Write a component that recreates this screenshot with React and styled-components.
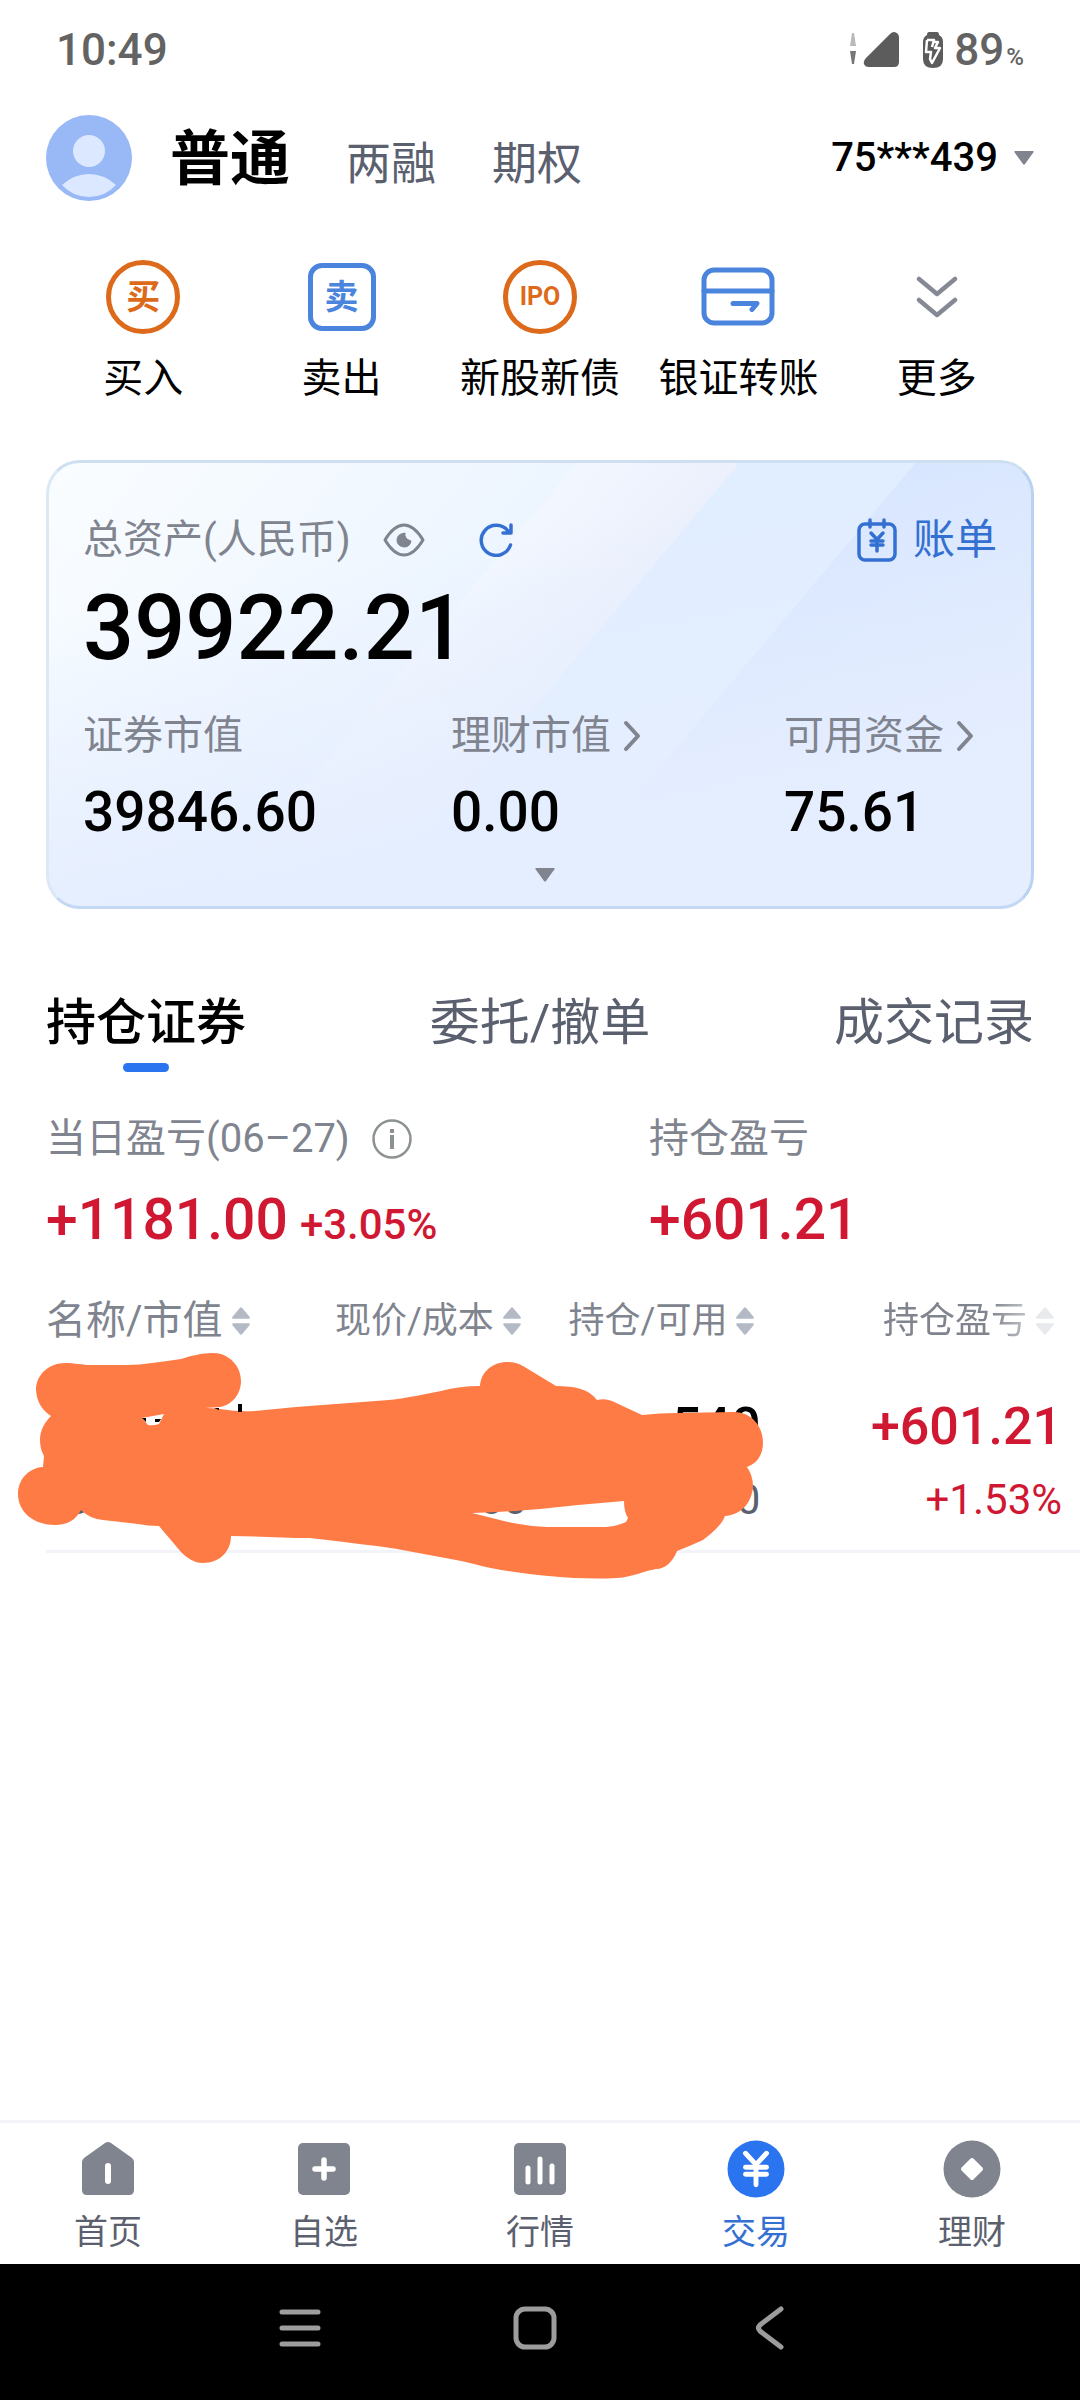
import React, { useState } from 'react';
import styled, { createGlobalStyle } from 'styled-components';
import { JapaneseYen } from 'lucide-react';

const colors = {
  text: '#000',
  muted: '#80848f',
  slate: '#5b606f',
  blue: '#2a74ef',
  link: '#3470d2',
  orange: '#dc6a1a',
  outline: '#4a84dd',
  red: '#d01832',
  line: '#f2f4f9',
  scribble: '#ff7b46'
};

const GlobalStyle = createGlobalStyle`
  * {
    box-sizing: border-box;
  }
  body {
    margin: 0;
    background: #fff;
    color: ${colors.text};
    font-family: Roboto, 'Noto Sans CJK SC', sans-serif;
    font-size: 40px;
    line-height: 48px;
  }
  button {
    margin: 0;
    padding: 0;
    border: 0;
    background: none;
    color: inherit;
    font: inherit;
    cursor: pointer;
  }
  svg {
    display: block;
    flex: none;
  }
`;

const Page = styled.div`
  display: flex;
  flex-direction: column;
  min-height: 100vh;
`;

const StatusBar = styled.div`
  display: flex;
  align-items: center;
  justify-content: space-between;
  height: 100px;
  padding: 0 56px;
  color: #636363;
  font-size: 44px;
  font-weight: 500;
`;

const StatusIcons = styled.div`
  display: flex;
  align-items: center;
  gap: 22px;
`;

const Battery = styled.div`
  display: flex;
  align-items: center;
  gap: 10px;
`;

const Percent = styled.span`
  display: flex;
  align-items: baseline;
  gap: 2px;
  small {
    font-size: 24px;
    line-height: 24px;
  }
`;

const Header = styled.header`
  display: flex;
  align-items: center;
  height: 116px;
  padding: 0 46px;
`;

const Markets = styled.nav`
  display: flex;
  flex: 1;
  align-items: baseline;
  gap: 56px;
  margin-left: 38px;
  padding-top: 8px;
`;

const Market = styled.button`
  color: ${props => (props.$active ? colors.text : colors.slate)};
  font-size: ${props => (props.$active ? '60px' : '45px')};
  font-weight: ${props => (props.$active ? 700 : 400)};
  line-height: 72px;
`;

const Account = styled.button`
  display: flex;
  align-items: center;
  gap: 16px;
  font-weight: 500;
`;

const Actions = styled.nav`
  display: grid;
  grid-template-columns: repeat(5, 1fr);
  padding: 42px 44px 0;
`;

const Action = styled.button`
  display: flex;
  flex-direction: column;
  align-items: center;
  gap: 19px;
  white-space: nowrap;
`;

const IconSlot = styled.span`
  display: flex;
  align-items: center;
  justify-content: center;
  height: 78px;
`;

const Badge = styled.span`
  display: flex;
  align-items: center;
  justify-content: center;
  width: ${props => (props.$round ? '74px' : '68px')};
  height: ${props => (props.$round ? '74px' : '68px')};
  border: 5px solid ${props => props.$color};
  border-radius: ${props => (props.$round ? '50%' : '14px')};
  color: ${props => props.$color};
  font-size: ${props => (props.$latin ? '25px' : '34px')};
  font-weight: 700;
`;

const Card = styled.section`
  margin: 57px 46px 0;
  padding: 53px 34px 24px;
  border: 3px solid;
  border-color: #cfdff2 #b9d2f2 #c2d8f4 #dbe8f6;
  border-radius: 34px;
  background: linear-gradient(170deg, rgba(229, 238, 255, 0) 25%, #e5eeff 75%),
    linear-gradient(
      130deg,
      #fafdff 0%,
      #edf5ff 39%,
      #f2f7ff 39%,
      #ebf0fc 51%,
      #e1eeff 51%,
      #e1eeff 64%,
      #d8e6ff 64%,
      #dde9fd 100%
    );
`;

const CardHead = styled.div`
  display: flex;
  align-items: center;
  color: ${colors.muted};
`;

const EyeButton = styled.button`
  margin-left: 32px;
`;

const RefreshButton = styled.button`
  margin-left: 54px;
`;

const BillLink = styled.a`
  display: flex;
  align-items: center;
  gap: 16px;
  margin-left: auto;
  color: ${colors.link};
  font-size: 42px;
  text-decoration: none;
`;

const Total = styled.div`
  margin-top: 17px;
  font-size: 90px;
  font-weight: 500;
  line-height: 96px;
`;

const Figures = styled.dl`
  display: grid;
  grid-template-columns: 368fr 333fr 213fr;
  margin: 35px 0 0;
`;

const FigureName = styled.dt`
  display: flex;
  align-items: center;
  gap: 12px;
  color: ${colors.muted};
  white-space: nowrap;
`;

const FigureValue = styled.dd`
  margin: 20px 0 0;
  font-size: 55px;
  font-weight: 500;
  line-height: 64px;
`;

const Expand = styled.button`
  display: block;
  margin: 24px auto 0;
  padding-left: 10px;
`;

const Tabs = styled.nav`
  display: flex;
  justify-content: space-between;
  margin-top: 84px;
  padding: 0 46px;
`;

const Tab = styled.button`
  display: flex;
  flex-direction: column;
  align-items: center;
  gap: 10px;
  color: ${props => (props.$active ? colors.text : colors.slate)};
  font-size: 50px;
  font-weight: ${props => (props.$active ? 500 : 400)};
  line-height: 60px;
  &::after {
    content: '';
    width: 46px;
    height: 9px;
    border-radius: 5px;
    background: ${props => (props.$active ? colors.blue : 'transparent')};
  }
`;

const Profit = styled.section`
  display: grid;
  grid-template-columns: 603fr 385fr;
  margin-top: 43px;
  padding: 0 46px;
`;

const ProfitName = styled.div`
  display: flex;
  align-items: center;
  gap: 22px;
  color: ${colors.muted};
`;

const ProfitValue = styled.div`
  margin-top: 25px;
  color: ${colors.red};
  font-size: 57px;
  font-weight: 500;
  line-height: 64px;
  small {
    margin-left: 12px;
    font-size: 42px;
  }
`;

const Holdings = styled.section`
  position: relative;
  flex: 1;
  margin-top: 40px;
  padding-left: 46px;
`;

const Table = styled.table`
  width: 100%;
  border-collapse: collapse;
  table-layout: fixed;
`;

const HeadCell = styled.th`
  width: ${props => props.$width};
  padding: ${props => (props.$last ? '0 26px 0 0' : '0 6px 0 0')};
  color: ${colors.muted};
  font-size: ${props => (props.$first ? '40px' : '36px')};
  font-weight: 400;
  text-align: ${props => (props.$first ? 'left' : 'right')};
  mask-image: ${props =>
    props.$last
      ? 'linear-gradient(to right, #000 72%, rgba(0, 0, 0, 0.3) 88%)'
      : 'none'};
`;

const SortButton = styled.button`
  display: inline-flex;
  align-items: center;
  gap: 9px;
  vertical-align: top;
  white-space: nowrap;
`;

const Row = styled.tr`
  border-bottom: 3px solid ${colors.line};
`;

const Cell = styled.td`
  padding: ${props => (props.$last ? '52px 18px 26px 0' : '52px 0 26px')};
  color: ${props => (props.$gain ? colors.red : colors.text)};
  text-align: ${props => (props.$first ? 'left' : 'right')};
`;

const Primary = styled.div`
  height: 60px;
  font-size: 52px;
  font-weight: 500;
  line-height: 60px;
`;

const Secondary = styled.div`
  margin-top: 19px;
  color: ${props => (props.$gain ? colors.red : colors.slate)};
  font-size: 42px;
`;

// lies over the first row and hides most of it
const Scribble = styled.svg`
  position: absolute;
  top: 53px;
  left: 0;
`;

const TabBar = styled.nav`
  display: grid;
  grid-template-columns: repeat(5, 1fr);
  height: 144px;
  border-top: 3px solid #f4f4f9;
`;

const TabLink = styled.a`
  display: flex;
  flex-direction: column;
  align-items: center;
  gap: 14px;
  padding-top: 17px;
  color: ${props => (props.$active ? colors.link : colors.slate)};
  font-size: 34px;
  line-height: 40px;
  text-decoration: none;
`;

const SystemBar = styled.div`
  display: flex;
  align-items: center;
  justify-content: center;
  height: 136px;
  padding: 0 10px 8px 0;
  background: #000;
`;

const SystemButton = styled.button`
  display: flex;
  justify-content: center;
  width: 235px;
`;

const Caret = () => (
  <svg width="20" height="14" viewBox="0 0 20 14" fill={colors.muted}>
    <path d="M1.500 0h17q2 0 .8 1.600L11 13q-1 1.300-2 0L.7 1.600Q-.5 0 1.500 0z" />
  </svg>
);

const Chevron = () => (
  <svg width="18" height="32" viewBox="0 0 18 32" fill="none" stroke={colors.muted} strokeWidth="4" strokeLinecap="round" strokeLinejoin="round">
    <path d="M3 3l12 13L3 29" />
  </svg>
);

const SortIcon = () => (
  <svg width="18" height="28" viewBox="0 0 18 28" fill="#b3bac6">
    <path d="M8 .8q1-1 2 0l7.500 9q1 2-1 2h-15q-2 0-1-2zM8 27.200q1 1 2 0l7.500-9q1-2-1-2h-15q-2 0-1 2z" />
  </svg>
);

const SignalIcon = () => (
  <svg width="50" height="36" viewBox="0 0 50 36">
    <path d="M2 1h2l2 13H0z" fill="#b9b9b9" />
    <path d="M0 19h6L4 32H2z" fill="#777" />
    <path d="M40 2q3-3 6-1.500t3 5V30q0 5-5 5H19q-4 0-5-3t2-6z" fill="#5c5c5c" />
  </svg>
);

const BatteryIcon = () => (
  <svg width="22" height="38" viewBox="0 0 22 38">
    <path d="M7 1h8q2 0 2 3 4 2 4 7v17q0 9-10 9T1 28V11q0-5 4-7 0-3 2-3z" fill="#5c5c5c" />
    <path d="M5 9h7l-2 7M5 9l-1 12h5l-1 7 2 4 8-15h-5l3-6h-5" fill="none" stroke="#fff" strokeWidth="2.500" strokeLinejoin="round" />
  </svg>
);

const Avatar = () => (
  <svg width="86" height="86" viewBox="0 0 86 86">
    <circle cx="43" cy="43" r="43" fill="#99b8f6" />
    <circle cx="43" cy="36" r="16" fill="#dce8ff" />
    <path d="M16 70q12-11 27-11t27 11q-11 12-27 12T16 70z" fill="#dce8ff" />
  </svg>
);

const TransferIcon = () => (
  <svg width="74" height="60" viewBox="0 0 74 60" fill="none" stroke={colors.outline} strokeWidth="5" strokeLinecap="round" strokeLinejoin="round">
    <rect x="3" y="3" width="68" height="53" rx="10" />
    <path d="M3 24h68M32 36.500h24l-5 6" />
  </svg>
);

const MoreIcon = () => (
  <svg width="42" height="42" viewBox="0 0 42 42" fill="none" stroke="#858994" strokeWidth="4.500" strokeLinecap="round" strokeLinejoin="round">
    <path d="M3 3l18 15L39 3M3 24l18 15 18-15" />
  </svg>
);

const EyeIcon = () => (
  <svg width="42" height="34" viewBox="0 0 42 34">
    <path d="M2 17Q11 2 21 2t19 15Q31 32 21 32T2 17z" fill="none" stroke={colors.muted} strokeWidth="3" strokeLinejoin="round" />
    <path d="M22 10q-1 6 6 8-1 6-7 6-7-1-7-7t8-7z" fill={colors.muted} stroke={colors.muted} strokeLinejoin="round" />
  </svg>
);

const RefreshIcon = () => (
  <svg width="34" height="34" viewBox="0 0 34 34" fill="none" stroke={colors.link} strokeWidth="3.500" strokeLinecap="round" strokeLinejoin="round">
    <path d="M31.500 22A15 15 0 1 1 29 8M32 2v8h-8" />
  </svg>
);

const BillIcon = () => (
  <svg width="40" height="44" viewBox="0 0 40 44" fill="none" stroke={colors.link} strokeWidth="3.500" strokeLinecap="round">
    <rect x="2" y="6" width="36" height="36" rx="6" />
    <path d="M13 2v7M27 2v7" />
    <JapaneseYen x="8" y="12" width="24" height="24" strokeWidth={3.5} />
  </svg>
);

const InfoIcon = () => (
  <svg width="40" height="40" viewBox="0 0 40 40">
    <circle cx="20" cy="20" r="18.500" fill="none" stroke="#8c9192" strokeWidth="2.500" />
    <path d="M18 10h4v4h-4zM18 16h4v14h-4z" fill="#8c9192" />
  </svg>
);

const HomeIcon = () => (
  <svg width="58" height="58" viewBox="0 0 58 58">
    <path d="M26 3q3-2 6 0l21 15q2 2 2 4v28q0 5-5 5H8q-5 0-5-5V22q0-2 2-4z" fill={colors.muted} />
    <path d="M29 26v15" stroke="#fff" strokeWidth="6" strokeLinecap="round" />
  </svg>
);

const WatchIcon = () => (
  <svg width="58" height="58" viewBox="0 0 58 58">
    <rect x="3" y="3" width="52" height="52" rx="5" fill={colors.muted} />
    <path d="M29 20v18M20 29h18" stroke="#fff" strokeWidth="5.500" strokeLinecap="round" />
  </svg>
);

const QuotesIcon = () => (
  <svg width="58" height="58" viewBox="0 0 58 58">
    <rect x="3" y="3" width="52" height="52" rx="5" fill={colors.muted} />
    <path d="M17 28v14M29 19v23M41 26v16" stroke="#fff" strokeWidth="5" strokeLinecap="round" />
  </svg>
);

const TradeIcon = () => (
  <svg width="58" height="58" viewBox="0 0 58 58">
    <circle cx="29" cy="29" r="28.500" fill={colors.blue} />
    <JapaneseYen x="8" y="8" width="42" height="42" color="#fff" strokeWidth={2.8} />
  </svg>
);

const WealthIcon = () => (
  <svg width="58" height="58" viewBox="0 0 58 58">
    <circle cx="29" cy="29" r="28.500" fill={colors.muted} />
    <path d="M29 20l9 9-9 9-9-9z" fill="#fff" stroke="#fff" strokeWidth="4" strokeLinejoin="round" />
  </svg>
);

const actions = [
  { label: '买入', icon: <Badge $round $color={colors.orange}>买</Badge> },
  { label: '卖出', icon: <Badge $color={colors.outline}>卖</Badge> },
  { label: '新股新债', icon: <Badge $round $latin $color={colors.orange}>IPO</Badge> },
  { label: '银证转账', icon: <TransferIcon /> },
  { label: '更多', icon: <MoreIcon /> }
];

const figures = [
  { name: '证券市值', value: '39846.60' },
  { name: '理财市值', value: '0.00', more: true },
  { name: '可用资金', value: '75.61', more: true }
];

const columns = [
  { name: '名称/市值', width: '24.5%' },
  { name: '现价/成本', width: '22%' },
  { name: '持仓/可用', width: '22.6%' },
  { name: '持仓盈亏' }
];

const pages = [
  { label: '首页', icon: <HomeIcon /> },
  { label: '自选', icon: <WatchIcon /> },
  { label: '行情', icon: <QuotesIcon /> },
  { label: '交易', icon: <TradeIcon />, active: true },
  { label: '理财', icon: <WealthIcon /> }
];

const App = () => {
  const [market, setMarket] = useState('普通');
  const [tab, setTab] = useState('持仓证券');

  return (
    <Page>
      <GlobalStyle />
      <StatusBar>
        <span>10:49</span>
        <StatusIcons>
          <SignalIcon />
          <Battery>
            <BatteryIcon />
            <Percent>89<small>%</small></Percent>
          </Battery>
        </StatusIcons>
      </StatusBar>

      <Header>
        <Avatar />
        <Markets>
          {['普通', '两融', '期权'].map(name => (
            <Market key={name} $active={name === market} onClick={() => setMarket(name)}>
              {name}
            </Market>
          ))}
        </Markets>
        <Account>
          75***439
          <Caret />
        </Account>
      </Header>

      <Actions>
        {actions.map(({ label, icon }) => (
          <Action key={label}>
            <IconSlot aria-hidden="true">{icon}</IconSlot>
            {label}
          </Action>
        ))}
      </Actions>

      <Card>
        <CardHead>
          总资产(人民币)
          <EyeButton aria-label="隐藏金额"><EyeIcon /></EyeButton>
          <RefreshButton aria-label="刷新"><RefreshIcon /></RefreshButton>
          <BillLink href="#bill"><BillIcon />账单</BillLink>
        </CardHead>
        <Total>39922.21</Total>
        <Figures>
          {figures.map(({ name, value, more }) => (
            <div key={name}>
              <FigureName>{name}{more && <Chevron />}</FigureName>
              <FigureValue>{value}</FigureValue>
            </div>
          ))}
        </Figures>
        <Expand aria-label="展开"><Caret /></Expand>
      </Card>

      <Tabs>
        {['持仓证券', '委托/撤单', '成交记录'].map(name => (
          <Tab key={name} $active={name === tab} onClick={() => setTab(name)}>
            {name}
          </Tab>
        ))}
      </Tabs>

      <Profit>
        <div>
          <ProfitName>当日盈亏(06–27)<InfoIcon /></ProfitName>
          <ProfitValue>+1181.00<small>+3.05%</small></ProfitValue>
        </div>
        <div>
          <ProfitName>持仓盈亏</ProfitName>
          <ProfitValue>+601.21</ProfitValue>
        </div>
      </Profit>

      <Holdings>
        <Table>
          <thead>
            <tr>
              {columns.map(({ name, width }, i) => (
                <HeadCell key={name} $width={width} $first={i === 0} $last={i === 3}>
                  <SortButton>{name}<SortIcon /></SortButton>
                </HeadCell>
              ))}
            </tr>
          </thead>
          <tbody>
            <Row>
              <Cell $first>
                <Primary />
                <Secondary>39846.60</Secondary>
              </Cell>
              <Cell>
                <Primary />
                <Secondary>00</Secondary>
              </Cell>
              <Cell>
                <Primary>540</Primary>
                <Secondary>540</Secondary>
              </Cell>
              <Cell $last $gain>
                <Primary>+601.21</Primary>
                <Secondary $gain>+1.53%</Secondary>
              </Cell>
            </Row>
          </tbody>
        </Table>
        <Scribble width="780" height="232" viewBox="0 1350 780 232" aria-hidden="true">
          <path
            fill={colors.scribble}
            fillRule="evenodd"
            d="M36 1390C36 1374 50 1363 65 1363C75 1363 82 1365 91 1365H127Q140 1365 152 1363Q168 1361 181 1359C190 1356 202 1353 213 1353C229 1353 241 1366 241 1381C241 1394 232 1405 220 1407L205 1408Q213 1408 220 1409Q238 1412 255 1411L296 1407L389 1400C408 1398 424 1394 441 1391Q460 1386 480 1386C481 1372 492 1362 508 1362Q516 1362 523 1366L556 1386C575 1386 589 1389 597 1400Q605 1398 612 1401L642 1415Q660 1413 677 1413L734 1412C752 1412 763 1427 763 1442Q763 1461 747 1467Q753 1476 753 1486C752 1503 741 1515 725 1516C721 1526 711 1534 703 1540Q690 1546 677 1551C673 1561 666 1569 656 1569C644 1571 632 1577 617 1578C580 1580 542 1576 508 1571C490 1569 473 1563 456 1560L413 1552C390 1547 367 1545 344 1542L310 1538C284 1538 258 1536 231 1536C231 1552 219 1563 203 1563C194 1563 187 1558 181 1552L159 1526Q148 1526 138 1524L103 1520Q90 1519 81 1510C76 1520 67 1525 55 1525C35 1525 18 1513 18 1494C18 1480 28 1468 43 1467L44 1456Q40 1449 40 1440C40 1430 45 1422 51 1416Q37 1407 36 1390ZM472 1513Q506 1512 540 1509L578 1505L624 1501Q624 1512 628 1518L626 1522Q618 1526 606 1527H547Q526 1526 508 1522ZM142 1418L164 1414L159 1424Q153 1426 148 1425Z"
          />
          <path d="M142 1418h4v4zM155 1419h6l-2 3h-4zM238 1404h4v8h-4zM214 1408h5v2z" />
        </Scribble>
      </Holdings>

      <TabBar>
        {pages.map(({ label, icon, active }) => (
          <TabLink key={label} href="#" $active={active}>
            {icon}
            {label}
          </TabLink>
        ))}
      </TabBar>

      <SystemBar>
        <SystemButton aria-label="最近任务">
          <svg width="44" height="44" viewBox="0 0 44 44" stroke="#9c9c9c" strokeWidth="5" strokeLinecap="round">
            <path d="M4 6h36M4 22h36M4 38h36" />
          </svg>
        </SystemButton>
        <SystemButton aria-label="主屏幕">
          <svg width="44" height="44" viewBox="0 0 44 44" fill="none" stroke="#9c9c9c" strokeWidth="5">
            <rect x="3" y="3" width="38" height="38" rx="9" />
          </svg>
        </SystemButton>
        <SystemButton aria-label="返回">
          <svg width="44" height="44" viewBox="0 0 44 44" fill="none" stroke="#9c9c9c" strokeWidth="5" strokeLinecap="round">
            <path d="M33 3L12 19q-3 3 0 6l21 16" />
          </svg>
        </SystemButton>
      </SystemBar>
    </Page>
  );
};

export default App;
